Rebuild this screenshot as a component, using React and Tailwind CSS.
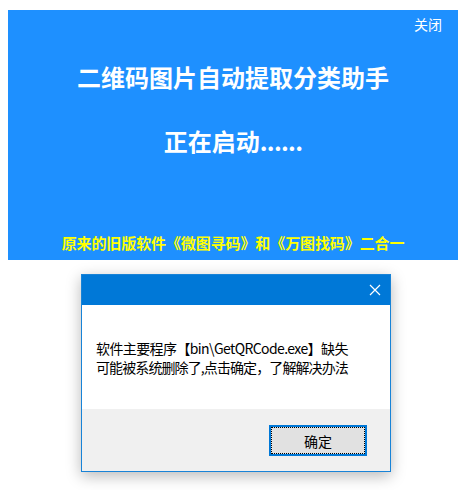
export default function App() {
  const cjk = { fontFamily: '"Noto Sans CJK SC", "Noto Sans", sans-serif' };
  return (
    <div className="w-[468px] h-[490px] bg-white overflow-hidden" style={cjk}>
      <div className="ml-[8px] mt-[10px] w-[450px] h-[250px] bg-[#1e90ff] flex flex-col">
        <div className="flex justify-end pr-[16px] pt-[4px]">
          <span className="text-[14px] leading-[20px] text-white">关闭</span>
        </div>
        <div className="mt-[27px] text-center text-white font-bold text-[24px] leading-[32px]">
          二维码图片自动提取分类助手
        </div>
        <div className="mt-[32px] text-center text-white font-bold text-[24px] leading-[32px]">
          正在启动<span className="tracking-[-0.7px]">......</span>
        </div>
        <div className="mt-auto mb-[7px] text-center text-[#ffff00] font-bold text-[15px] leading-[20px] tracking-[-0.1px]">
          原来的旧版软件《微图寻码》和《万图找码》二合一
        </div>
      </div>
      <div className="ml-[81px] mt-[14px] w-[310px] h-[198px] border border-[#1883d7] bg-white flex flex-col shadow-[0_4px_14px_rgba(0,0,0,0.28)]">
        <div className="h-[30px] bg-[#0078d7] flex items-center justify-end pr-[9px]">
          <svg width="12" height="12" viewBox="0 0 12 12">
            <path d="M1 1 L11 11 M11 1 L1 11" stroke="white" strokeWidth="1.2" fill="none" />
          </svg>
        </div>
        <div className="h-[104px] bg-white pl-[14px] pt-[34px] text-[14px] leading-[19px] text-black whitespace-nowrap">
          <div className="tracking-[-0.6px]">软件主要程序【bin\GetQRCode.exe】缺失</div>
          <div className="tracking-[-0.9px]">可能被系统删除了,点击确定，了解解决办法</div>
        </div>
        <div className="flex-1 bg-[#f0f0f0] flex justify-end items-start pt-[16px] pr-[23px]">
          <button className="w-[98px] h-[31px] border-2 border-[#0078d7] bg-[#e1e1e1] text-[14px] leading-[20px] text-black outline-1 outline-dotted outline-black outline-offset-[-3px]">
            确定
          </button>
        </div>
      </div>
    </div>
  );
}
